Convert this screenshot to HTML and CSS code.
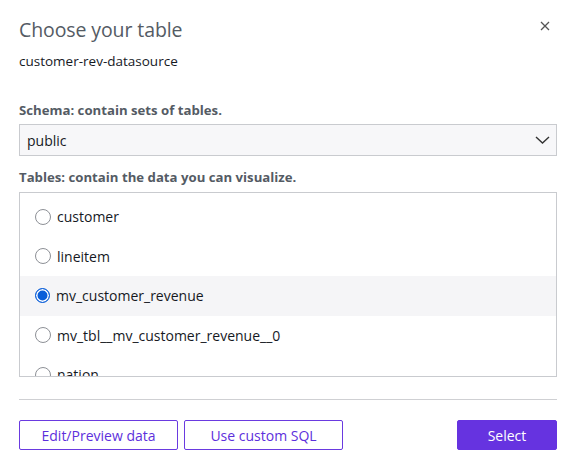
FILE: index.html
```html
<!DOCTYPE html>
<html>
<head>
<meta charset="utf-8">
<link rel="stylesheet" href="styles.css">
</head>
<body>
<div class="dialog">
  <div class="head">
    <h1 class="title">Choose your table</h1>
    <button class="close" aria-label="Close">
      <svg width="10" height="10" viewBox="0 0 10 10"><path d="M1 1L9 9M9 1L1 9" stroke="#555" stroke-width="1.3" fill="none"/></svg>
    </button>
  </div>
  <div class="source">customer-rev-datasource</div>
  <div class="label schema-label">Schema: contain sets of tables.</div>
  <div class="select">
    <span>public</span>
    <svg width="15" height="8" viewBox="0 0 15 8"><path d="M1 1L7.5 7L14 1" stroke="#333" stroke-width="1.4" fill="none"/></svg>
  </div>
  <div class="label tables-label">Tables: contain the data you can visualize.</div>
  <div class="list">
    <div class="row"><span class="radio"></span><span>customer</span></div>
    <div class="row"><span class="radio"></span><span>lineitem</span></div>
    <div class="row selected"><span class="radio on"></span><span>mv_customer_revenue</span></div>
    <div class="row"><span class="radio"></span><span>mv_tbl__mv_customer_revenue__0</span></div>
    <div class="row"><span class="radio"></span><span>nation</span></div>
  </div>
  <div class="divider"></div>
  <div class="footer">
    <button class="btn outline wide">Edit/Preview data</button>
    <button class="btn outline wide">Use custom SQL</button>
    <span class="spacer"></span>
    <button class="btn primary">Select</button>
  </div>
</div>
</body>
</html>
```

FILE: styles.css
```css
html, body {
  margin: 0;
  padding: 0;
  background: #fff;
}
body {
  font-family: "Open Sans", "Noto Sans", sans-serif;
  color: #16191f;
  width: 581px;
  height: 468px;
  overflow: hidden;
}
.dialog {
  padding: 0 24px 0 19px;
  display: flex;
  flex-direction: column;
}
.head {
  display: flex;
  justify-content: space-between;
  align-items: flex-start;
  padding-top: 15px;
  height: 30px;
}
.title {
  margin: 0;
  font-size: 19.5px;
  font-weight: 400;
  line-height: 30px;
  color: #545b64;
  letter-spacing: -0.1px;
}
.close {
  border: 0;
  background: none;
  padding: 0;
  margin: 6px 7px 0 0;
  width: 10px;
  height: 10px;
  display: flex;
}
.source {
  margin-top: 7px;
  font-size: 13.5px;
  line-height: 18px;
  color: #16191f;
}
.label {
  font-size: 13.2px;
  font-weight: 700;
  line-height: 18px;
  color: #545b64;
}
.schema-label {
  margin-top: 31px;
}
.select {
  margin-top: 5px;
  height: 30px;
  border: 1px solid #c9cbcf;
  background: #f7f7f9;
  display: flex;
  align-items: center;
  justify-content: space-between;
  padding: 0 6px 0 7px;
  font-size: 14px;
  color: #16191f;
}
.tables-label {
  margin-top: 12px;
}
.list {
  margin-top: 6px;
  height: 185px;
  border: 1px solid #c9cbcf;
  overflow: hidden;
  padding-top: 4px;
  box-sizing: border-box;
}
.row {
  height: 39.5px;
  display: flex;
  align-items: center;
  padding-left: 15px;
  gap: 6px;
  font-size: 14px;
  color: #16191f;
}
.row.selected {
  background: #f5f5f7;
}
.radio {
  width: 14px;
  height: 14px;
  border: 1px solid #8d9096;
  border-radius: 50%;
  background: #fff;
  flex: none;
}
.radio.on {
  border: 1.5px solid #0a5ed9;
  width: 13px;
  height: 13px;
  background: #0a5ed9;
  box-shadow: inset 0 0 0 1.5px #fff;
}
.divider {
  margin-top: 22px;
  height: 1px;
  background: #cfd0d3;
}
.footer {
  margin-top: 20px;
  display: flex;
  gap: 6px;
}
.spacer {
  flex: 1;
}
.btn {
  height: 30px;
  font-family: "Open Sans", "Noto Sans", sans-serif;
  font-size: 14px;
  border-radius: 2px;
  padding: 0;
  box-sizing: border-box;
}
.btn.outline {
  width: 159px;
  background: #fff;
  border: 1px solid #6a3ae0;
  color: #5d2fdc;
}
.btn.primary {
  width: 100px;
  background: #6633e0;
  border: 1px solid #6633e0;
  color: #fff;
}
```
